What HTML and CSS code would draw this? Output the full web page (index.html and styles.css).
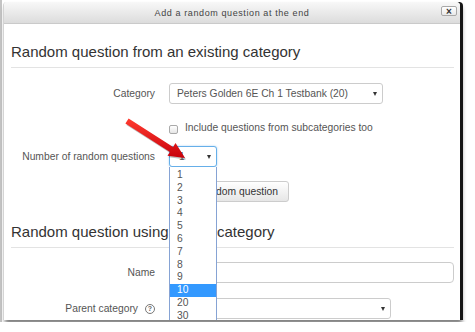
FILE: index.html
```html
<!DOCTYPE html>
<html lang="en">
<head>
    <meta charset="UTF-8">
    <meta name="viewport" content="width=device-width, initial-scale=1.0">
    <title>Add a random question</title>
    <link rel="stylesheet" href="styles.css">
</head>
<body>
    <div class="page">
        <div class="dialog">
            <div class="dialog-header">
                <span class="dialog-title">Add a random question at the end</span>
                <button class="close-btn" type="button">&times;</button>
            </div>
            <div class="dialog-body">
                <h3 class="section-title">Random question from an existing category</h3>

                <div class="form-row row-category">
                    <label class="form-label">Category</label>
                    <div class="select select-category">Peters Golden 6E Ch 1 Testbank (20)<span class="caret"></span></div>
                </div>

                <div class="form-row row-check">
                    <span class="form-label"></span>
                    <label class="check"><span class="checkbox"></span>Include questions from subcategories too</label>
                </div>

                <div class="form-row row-number">
                    <label class="form-label">Number of random questions</label>
                    <div class="select select-number">1<span class="caret"></span>
                        <ul class="dropdown">
                            <li>1</li>
                            <li>2</li>
                            <li>3</li>
                            <li>4</li>
                            <li>5</li>
                            <li>6</li>
                            <li>7</li>
                            <li>8</li>
                            <li>9</li>
                            <li class="active">10</li>
                            <li>20</li>
                            <li>30</li>
                        </ul>
                    </div>
                </div>

                <div class="form-row row-submit">
                    <span class="form-label"></span>
                    <button class="btn" type="button">Add random question</button>
                </div>

                <h3 class="section-title second">Random question using a new category</h3>

                <div class="form-row row-name">
                    <label class="form-label">Name</label>
                    <div class="text-input"></div>
                </div>

                <div class="form-row row-parent">
                    <label class="form-label">Parent category <span class="help">?</span></label>
                    <div class="select select-parent"><span class="caret"></span></div>
                </div>
            </div>
        </div>

        <!-- red pointer arrow drawn over the form -->
        <svg class="pointer-arrow" width="80" height="60" viewBox="0 0 80 60">
            <defs>
                <linearGradient id="arrowFill" x1="0" y1="0" x2="0" y2="1">
                    <stop offset="0" stop-color="#ff3b30"/>
                    <stop offset="1" stop-color="#c8000a"/>
                </linearGradient>
            </defs>
            <polygon points="17.6,10 62.1,38.4 64.5,34.6 74,49.5 56.5,47.2 58.9,43.4 14.4,15" fill="rgba(0,0,0,0.25)"/>
            <polygon points="16.6,8.5 61.1,36.9 63.5,33.1 73,48 55.5,45.7 57.9,41.9 13.4,13.5" fill="url(#arrowFill)"/>
        </svg>
    </div>
</body>
</html>
```

FILE: styles.css
```css
/* General */
body {
    margin: 0;
    background: #fff;
    font-family: "Liberation Sans", Arial, sans-serif;
    font-size: 10.3px;
    color: #555;
}

.page {
    position: relative;
    width: 475px;
    height: 322px;
    box-sizing: border-box;
    border-left: 2px solid #c4c4c4;
    padding: 2px 0 0 1px;
}

/* Dialog */
.dialog {
    width: 457px;
    height: 318px;
    box-sizing: border-box;
    background: #fff;
    border-left: 1px solid #d4d4d4;
    border-radius: 4px 4px 0 0;
    overflow: hidden;
    box-shadow: 3px 0 0 #151515, 2px 4px 4px rgba(0, 0, 0, 0.5);
}

.dialog-header {
    height: 22px;
    box-sizing: border-box;
    background: linear-gradient(#f8f8f8, #dcdcdc);
    border-bottom: 1px solid #cacaca;
    display: grid;
    grid-template-columns: 1fr auto 1fr;
    align-items: center;
}

.dialog-title {
    grid-column: 2;
    font-size: 9px;
    letter-spacing: 0.6px;
    color: #444;
}

.close-btn {
    grid-column: 3;
    justify-self: end;
    align-self: start;
    margin: 4px 3px 0 0;
    width: 16px;
    height: 10px;
    padding: 0;
    border: 1px solid #a8a8a8;
    border-radius: 2px;
    background: linear-gradient(#fff, #e9e9e9);
    font-family: "Liberation Sans", Arial, sans-serif;
    font-size: 10px;
    font-weight: bold;
    line-height: 7px;
    color: #333;
}

.dialog-body {
    padding: 0 6px 0 7px;
}

/* Section headings */
.section-title {
    margin: 19px 0 0;
    padding-bottom: 6px;
    border-bottom: 1px solid #e3e3e3;
    font-size: 15px;
    font-weight: normal;
    line-height: 18px;
    color: #333;
}

.section-title.second {
    margin-top: 21px;
}

/* Form rows */
.form-row {
    display: flex;
    align-items: center;
    height: 21px;
    margin-top: 15px;
}

.row-check {
    margin-top: 13px;
}

.row-number {
    margin-top: 8px;
}

.row-submit {
    margin-top: 14px;
}

.row-name {
    margin-top: 14px;
}

.form-label {
    flex: none;
    width: 144px;
    margin-right: 14px;
    display: flex;
    justify-content: flex-end;
    align-items: center;
    color: #555;
}

.help {
    width: 10px;
    height: 10px;
    box-sizing: border-box;
    margin-left: 7px;
    border: 1px solid #777;
    border-radius: 50%;
    font-size: 7px;
    font-weight: bold;
    line-height: 8px;
    text-align: center;
    color: #666;
}

/* Selects */
.select {
    position: relative;
    height: 21px;
    box-sizing: border-box;
    border: 1px solid #ccc;
    border-radius: 3px;
    padding-left: 7px;
    display: flex;
    align-items: center;
    background: #fff;
    color: #555;
}

.select-category {
    width: 214px;
}

.select-number {
    width: 48px;
    padding-left: 9px;
    border-color: #66afe9;
    box-shadow: 0 0 2px rgba(102, 175, 233, 0.6);
    z-index: 5;
}

.select-parent {
    width: 222px;
}

.caret {
    position: absolute;
    right: 5px;
    top: 8px;
    border-top: 4px solid #333;
    border-left: 2.5px solid transparent;
    border-right: 2.5px solid transparent;
}

/* Open list */
.dropdown {
    position: absolute;
    top: 20px;
    left: -1px;
    width: 48px;
    box-sizing: border-box;
    margin: 0;
    padding: 2px 0 0;
    list-style: none;
    background: #fff;
    border: 1px solid #86a3d4;
    border-top: none;
}

.dropdown li {
    height: 12.8px;
    line-height: 12.8px;
    padding-left: 7px;
    color: #555;
}

.dropdown .active {
    background: #3399ff;
    color: #fff;
}

/* Checkbox */
.check {
    display: flex;
    align-items: center;
    color: #555;
}

.checkbox {
    width: 9px;
    height: 9px;
    box-sizing: border-box;
    margin: 3px 7px 0 0;
    border: 1px solid #aaa;
    border-radius: 2px;
    background: linear-gradient(#fff, #e6e6e6);
}

/* Button */
.btn {
    height: 21px;
    padding: 0 10px;
    border: 1px solid #ccc;
    border-radius: 3px;
    background: linear-gradient(#fff, #e6e6e6);
    font-family: "Liberation Sans", Arial, sans-serif;
    font-size: 10.3px;
    color: #333;
}

/* Text input */
.text-input {
    flex: 1;
    height: 21px;
    box-sizing: border-box;
    border: 1px solid #ccc;
    border-radius: 4px;
}

/* Pointer arrow */
.pointer-arrow {
    position: absolute;
    left: 110px;
    top: 110px;
    z-index: 10;
    pointer-events: none;
}
```
